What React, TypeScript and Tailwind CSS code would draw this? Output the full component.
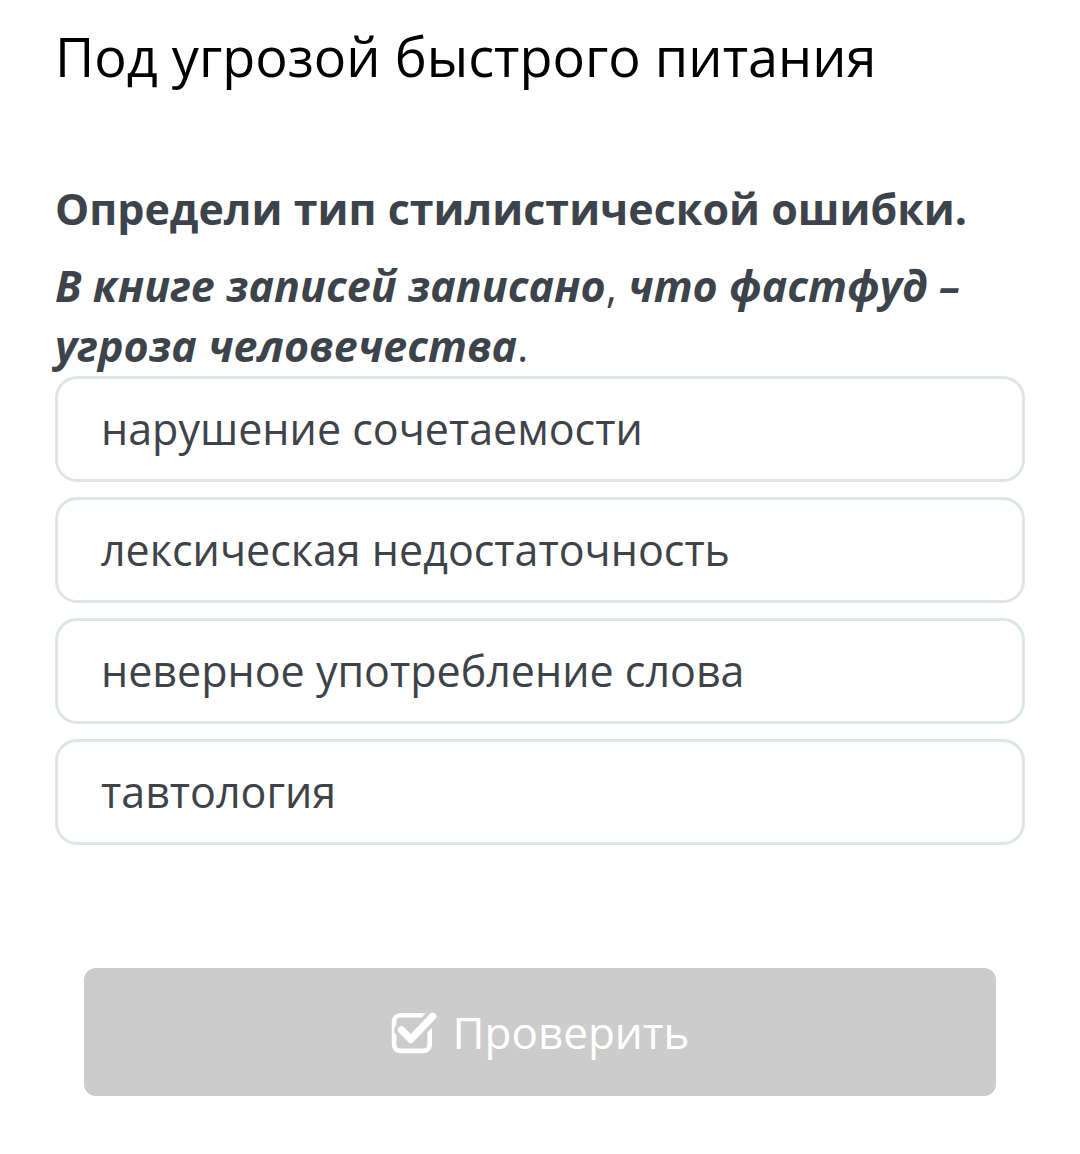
import React from 'react';

const options = [
  'нарушение сочетаемости',
  'лексическая недостаточность',
  'неверное употребление слова',
  'тавтология',
];

function CheckIcon() {
  return (
    <svg width="46" height="44" viewBox="0 0 44 42" fill="none" className="shrink-0">
      <rect x="3" y="5" width="34" height="34" rx="6" stroke="white" strokeWidth="4.5" />
      <path d="M10 19 L19 28 L40 6" stroke="#cccccc" strokeWidth="14" strokeLinecap="round" strokeLinejoin="round" />
      <path d="M10 19 L19 28 L40 6" stroke="white" strokeWidth="7" strokeLinecap="round" strokeLinejoin="round" />
    </svg>
  );
}

export default function App() {
  return (
    <div
      className="w-[1080px] h-[1154px] bg-white px-[55px] pt-[20px]"
      style={{ fontFamily: '"Open Sans", "Noto Sans", sans-serif' }}
    >
      <h1 className="text-[54px] leading-[72px] text-black">Под угрозой быстрого питания</h1>

      <p className="mt-[90px] text-[43px] leading-[54px] font-bold text-[#3d434a]">
        Определи тип стилистической ошибки.
      </p>
      <p className="mt-[20px] text-[43px] leading-[60px] font-bold italic text-[#3d434a]">
        В книге записей записано<span className="font-normal not-italic">,</span> что фастфуд –
        угроза человечества<span className="font-normal not-italic">.</span>
      </p>

      <div className="mt-[0px] flex flex-col gap-[15px] w-[970px]">
        {options.map((o) => (
          <div
            key={o}
            className="h-[106px] rounded-[22px] border-[3px] border-[#dfe5e7] pl-[43px] flex items-center text-[43px] text-[#3e4349]"
          >
            {o}
          </div>
        ))}
      </div>

      <div className="mt-[123px] ml-[29px] w-[912px] h-[128px] rounded-[12px] bg-[#cccccc] flex items-center justify-center gap-[16px] text-white text-[44px]">
        <CheckIcon />
        <span>Проверить</span>
      </div>
    </div>
  );
}
